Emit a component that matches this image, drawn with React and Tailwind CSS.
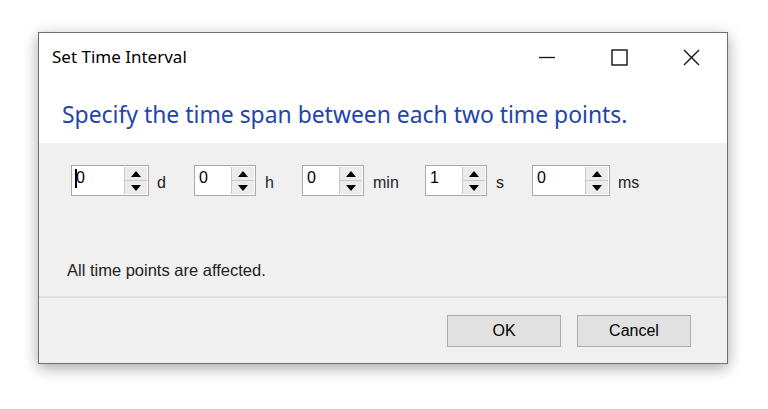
import React from "react";

function Spin({ value, w, caret }) {
  return (
    <div className={`flex h-[31px] shrink-0 border border-[#a9a9a9] bg-white ${w}`}>
      <div className="relative flex flex-1 items-start pl-[4px] pt-[3px] text-[16px] leading-[18px] text-black">
        {caret ? (
          <span className="relative">
            <span className="absolute left-[-1px] top-[0px] h-[19px] w-[2px] bg-black" />
            {value}
          </span>
        ) : (
          value
        )}
      </div>
      <div className="my-[1px] mr-[1px] flex w-[23px] flex-col border-l border-[#c8c8c8] bg-[#ececec]">
        <div className="flex flex-1 items-center justify-center border-b border-[#c8c8c8]">
          <svg width="10" height="6" viewBox="0 0 10 6"><path d="M5 0L10 6H0z" fill="#000" /></svg>
        </div>
        <div className="flex flex-1 items-center justify-center">
          <svg width="10" height="6" viewBox="0 0 10 6"><path d="M0 0h10L5 6z" fill="#000" /></svg>
        </div>
      </div>
    </div>
  );
}

function Group({ gw, bw, value, unit, ml, caret }) {
  return (
    <div className={`flex items-center ${gw}`}>
      <Spin value={value} w={bw} caret={caret} />
      <span className={`${ml} mt-[4px] text-[16px] text-[#222]`}>{unit}</span>
    </div>
  );
}

export default function App() {
  return (
    <div className="h-[409px] w-[768px] bg-white pl-[38px] pt-[32px] font-['Liberation_Sans',Arial,sans-serif]">
      <div className="flex h-[332px] w-[690px] flex-col border border-[#6f6f6f] bg-[#f0f0f0] shadow-[0_4px_14px_rgba(0,0,0,0.35)]">
        <div className="flex h-[110px] flex-col bg-white">
          <div className="flex h-[48px] items-center">
            <div className="flex-1 pl-[13px] pb-[1px] text-[17px] text-black font-['Noto_Sans',sans-serif]">
              Set Time Interval
            </div>
            <div className="flex h-full w-[72px] items-center justify-center">
              <svg width="16" height="16" viewBox="0 0 16 16"><path d="M0 8.5h16" stroke="#111" strokeWidth="1.3" /></svg>
            </div>
            <div className="flex h-full w-[72px] items-center justify-center">
              <svg width="17" height="17" viewBox="0 0 17 17"><rect x="1" y="1" width="15" height="15" fill="none" stroke="#111" strokeWidth="1.4" /></svg>
            </div>
            <div className="flex h-full w-[72px] items-center justify-center">
              <svg width="17" height="17" viewBox="0 0 17 17"><path d="M1 1L16 16M16 1L1 16" stroke="#111" strokeWidth="1.4" /></svg>
            </div>
          </div>
          <div className="pl-[23px] pt-[20px] text-[22.9px] leading-[28px] text-[#1f45ac] font-['Noto_Sans',sans-serif]">
            Specify the time span between each two time points.
          </div>
        </div>
        <div className="flex h-[155px] flex-col border-b-2 border-[#e0e0e0]">
          <div className="flex items-center pl-[32px] pt-[22px]">
            <Group gw="w-[123px]" bw="w-[78px]" value="0" unit="d" ml="ml-[8px]" caret />
            <Group gw="w-[108px]" bw="w-[62px]" value="0" unit="h" ml="ml-[9px]" />
            <Group gw="w-[123px]" bw="w-[62px]" value="0" unit="min" ml="ml-[9px]" />
            <Group gw="w-[107px]" bw="w-[62px]" value="1" unit="s" ml="ml-[9px]" />
            <Group gw="" bw="w-[78px]" value="0" unit="ms" ml="ml-[8px]" />
          </div>
          <div className="pl-[28px] pt-[62px] text-[16.5px] text-[#222]">All time points are affected.</div>
        </div>
        <div className="flex flex-1 items-start justify-end gap-[16px] pr-[36px] pt-[17px]">
          <button className="h-[32px] w-[114px] border border-[#adadad] bg-[#e1e1e1] text-[16px] text-black">OK</button>
          <button className="h-[32px] w-[114px] border border-[#adadad] bg-[#e1e1e1] text-[16px] text-black">Cancel</button>
        </div>
      </div>
    </div>
  );
}
